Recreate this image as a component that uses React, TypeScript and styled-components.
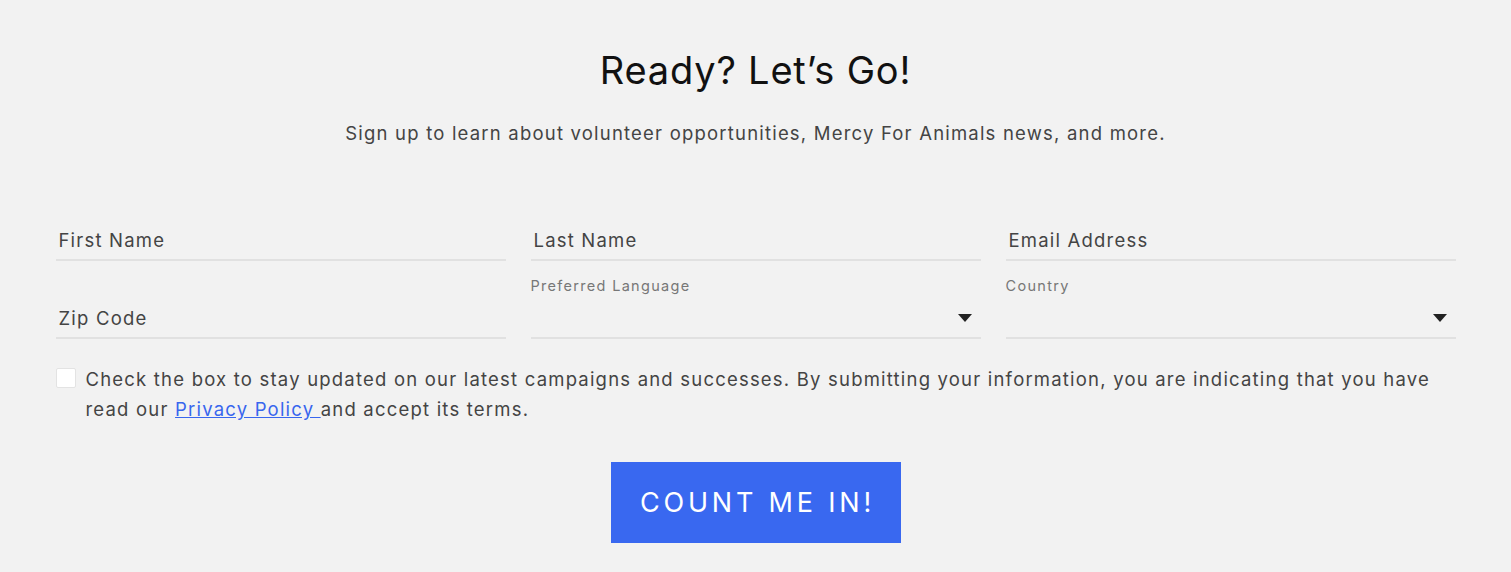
import React from "react";
import styled, { createGlobalStyle } from "styled-components";

const Global = createGlobalStyle`
  html, body { margin: 0; padding: 0; background: #f2f2f2; }
  body { font-family: "Inter", "Liberation Sans", sans-serif; color: #444; }
  * { box-sizing: border-box; }
`;

const Section = styled.section`
  display: flex;
  flex-direction: column;
  align-items: center;
  padding: 47px 0 29px;
  background: #f2f2f2;
`;

const Title = styled.h2`
  margin: 0;
  font-size: 38px;
  font-weight: 400;
  line-height: 46px;
  color: #111;
  letter-spacing: 0.8px;
`;

const Subtitle = styled.p`
  margin: 28px 0 0;
  font-size: 18.5px;
  line-height: 24px;
  color: #444;
  letter-spacing: 1.2px;
`;

const Form = styled.form`
  width: 1400px;
  margin-top: 75px;
  display: flex;
  flex-direction: column;
`;

const Grid = styled.div`
  display: grid;
  grid-template-columns: repeat(3, 450px);
  column-gap: 25px;
  row-gap: 16px;
  align-items: end;
`;

const Field = styled.div`
  display: flex;
  flex-direction: column;
`;

const Label = styled.label`
  font-size: 14.5px;
  line-height: 18px;
  color: #777;
  margin-bottom: 3px;
  letter-spacing: 1.3px;
`;

const Input = styled.input`
  width: 100%;
  height: 41px;
  border: none;
  border-bottom: 2px solid #e1e1e1;
  background: transparent;
  padding: 1px 3px 0;
  font-family: inherit;
  font-size: 18.5px;
  color: #444;
  letter-spacing: 1.2px;
  outline: none;
  &::placeholder { color: #444; }
`;

const SelectBox = styled.div`
  position: relative;
  height: 41px;
  border-bottom: 2px solid #e1e1e1;
`;

const Arrow = styled.span`
  position: absolute;
  right: 9px;
  top: 16px;
  width: 0;
  height: 0;
  border-left: 7px solid transparent;
  border-right: 7px solid transparent;
  border-top: 8px solid #222;
`;

const ConsentRow = styled.div`
  display: flex;
  align-items: flex-start;
  gap: 10px;
  margin-top: 27px;
`;

const Box = styled.span`
  flex: none;
  width: 20px;
  height: 20px;
  margin-top: 2px;
  background: #fff;
  border: 1px solid #e3e3e3;
  border-radius: 2px;
`;

const ConsentText = styled.p`
  margin: 0;
  margin-top: -2px;
  font-size: 18.5px;
  line-height: 30px;
  color: #444;
  letter-spacing: 1.2px;
`;

const Link = styled.a`
  color: #3866ee;
  text-decoration: underline;
`;

const Button = styled.button`
  align-self: center;
  margin-top: 38px;
  width: 290px;
  height: 81px;
  border: none;
  background: #3968f0;
  color: #fff;
  font-family: inherit;
  font-size: 27px;
  letter-spacing: 3.8px;
  font-weight: 400;
  padding: 0 0 0 4px;
`;

export default function App() {
  return (
    <>
      <Global />
      <Section>
        <Title>Ready? Let’s Go!</Title>
        <Subtitle>
          Sign up to learn about volunteer opportunities, Mercy For Animals news, and more.
        </Subtitle>
        <Form onSubmit={(e) => e.preventDefault()}>
          <Grid>
            <Field>
              <Input placeholder="First Name" />
            </Field>
            <Field>
              <Input placeholder="Last Name" />
            </Field>
            <Field>
              <Input placeholder="Email Address" />
            </Field>
            <Field>
              <Input placeholder="Zip Code" />
            </Field>
            <Field>
              <Label>Preferred Language</Label>
              <SelectBox>
                <Arrow />
              </SelectBox>
            </Field>
            <Field>
              <Label>Country</Label>
              <SelectBox>
                <Arrow />
              </SelectBox>
            </Field>
          </Grid>
          <ConsentRow>
            <Box />
            <ConsentText>
              Check the box to stay updated on our latest campaigns and successes. By submitting
              your information, you are indicating that you have read our{" "}
              <Link href="#">Privacy Policy </Link>and accept its terms.
            </ConsentText>
          </ConsentRow>
          <Button type="submit">COUNT ME IN!</Button>
        </Form>
      </Section>
    </>
  );
}
